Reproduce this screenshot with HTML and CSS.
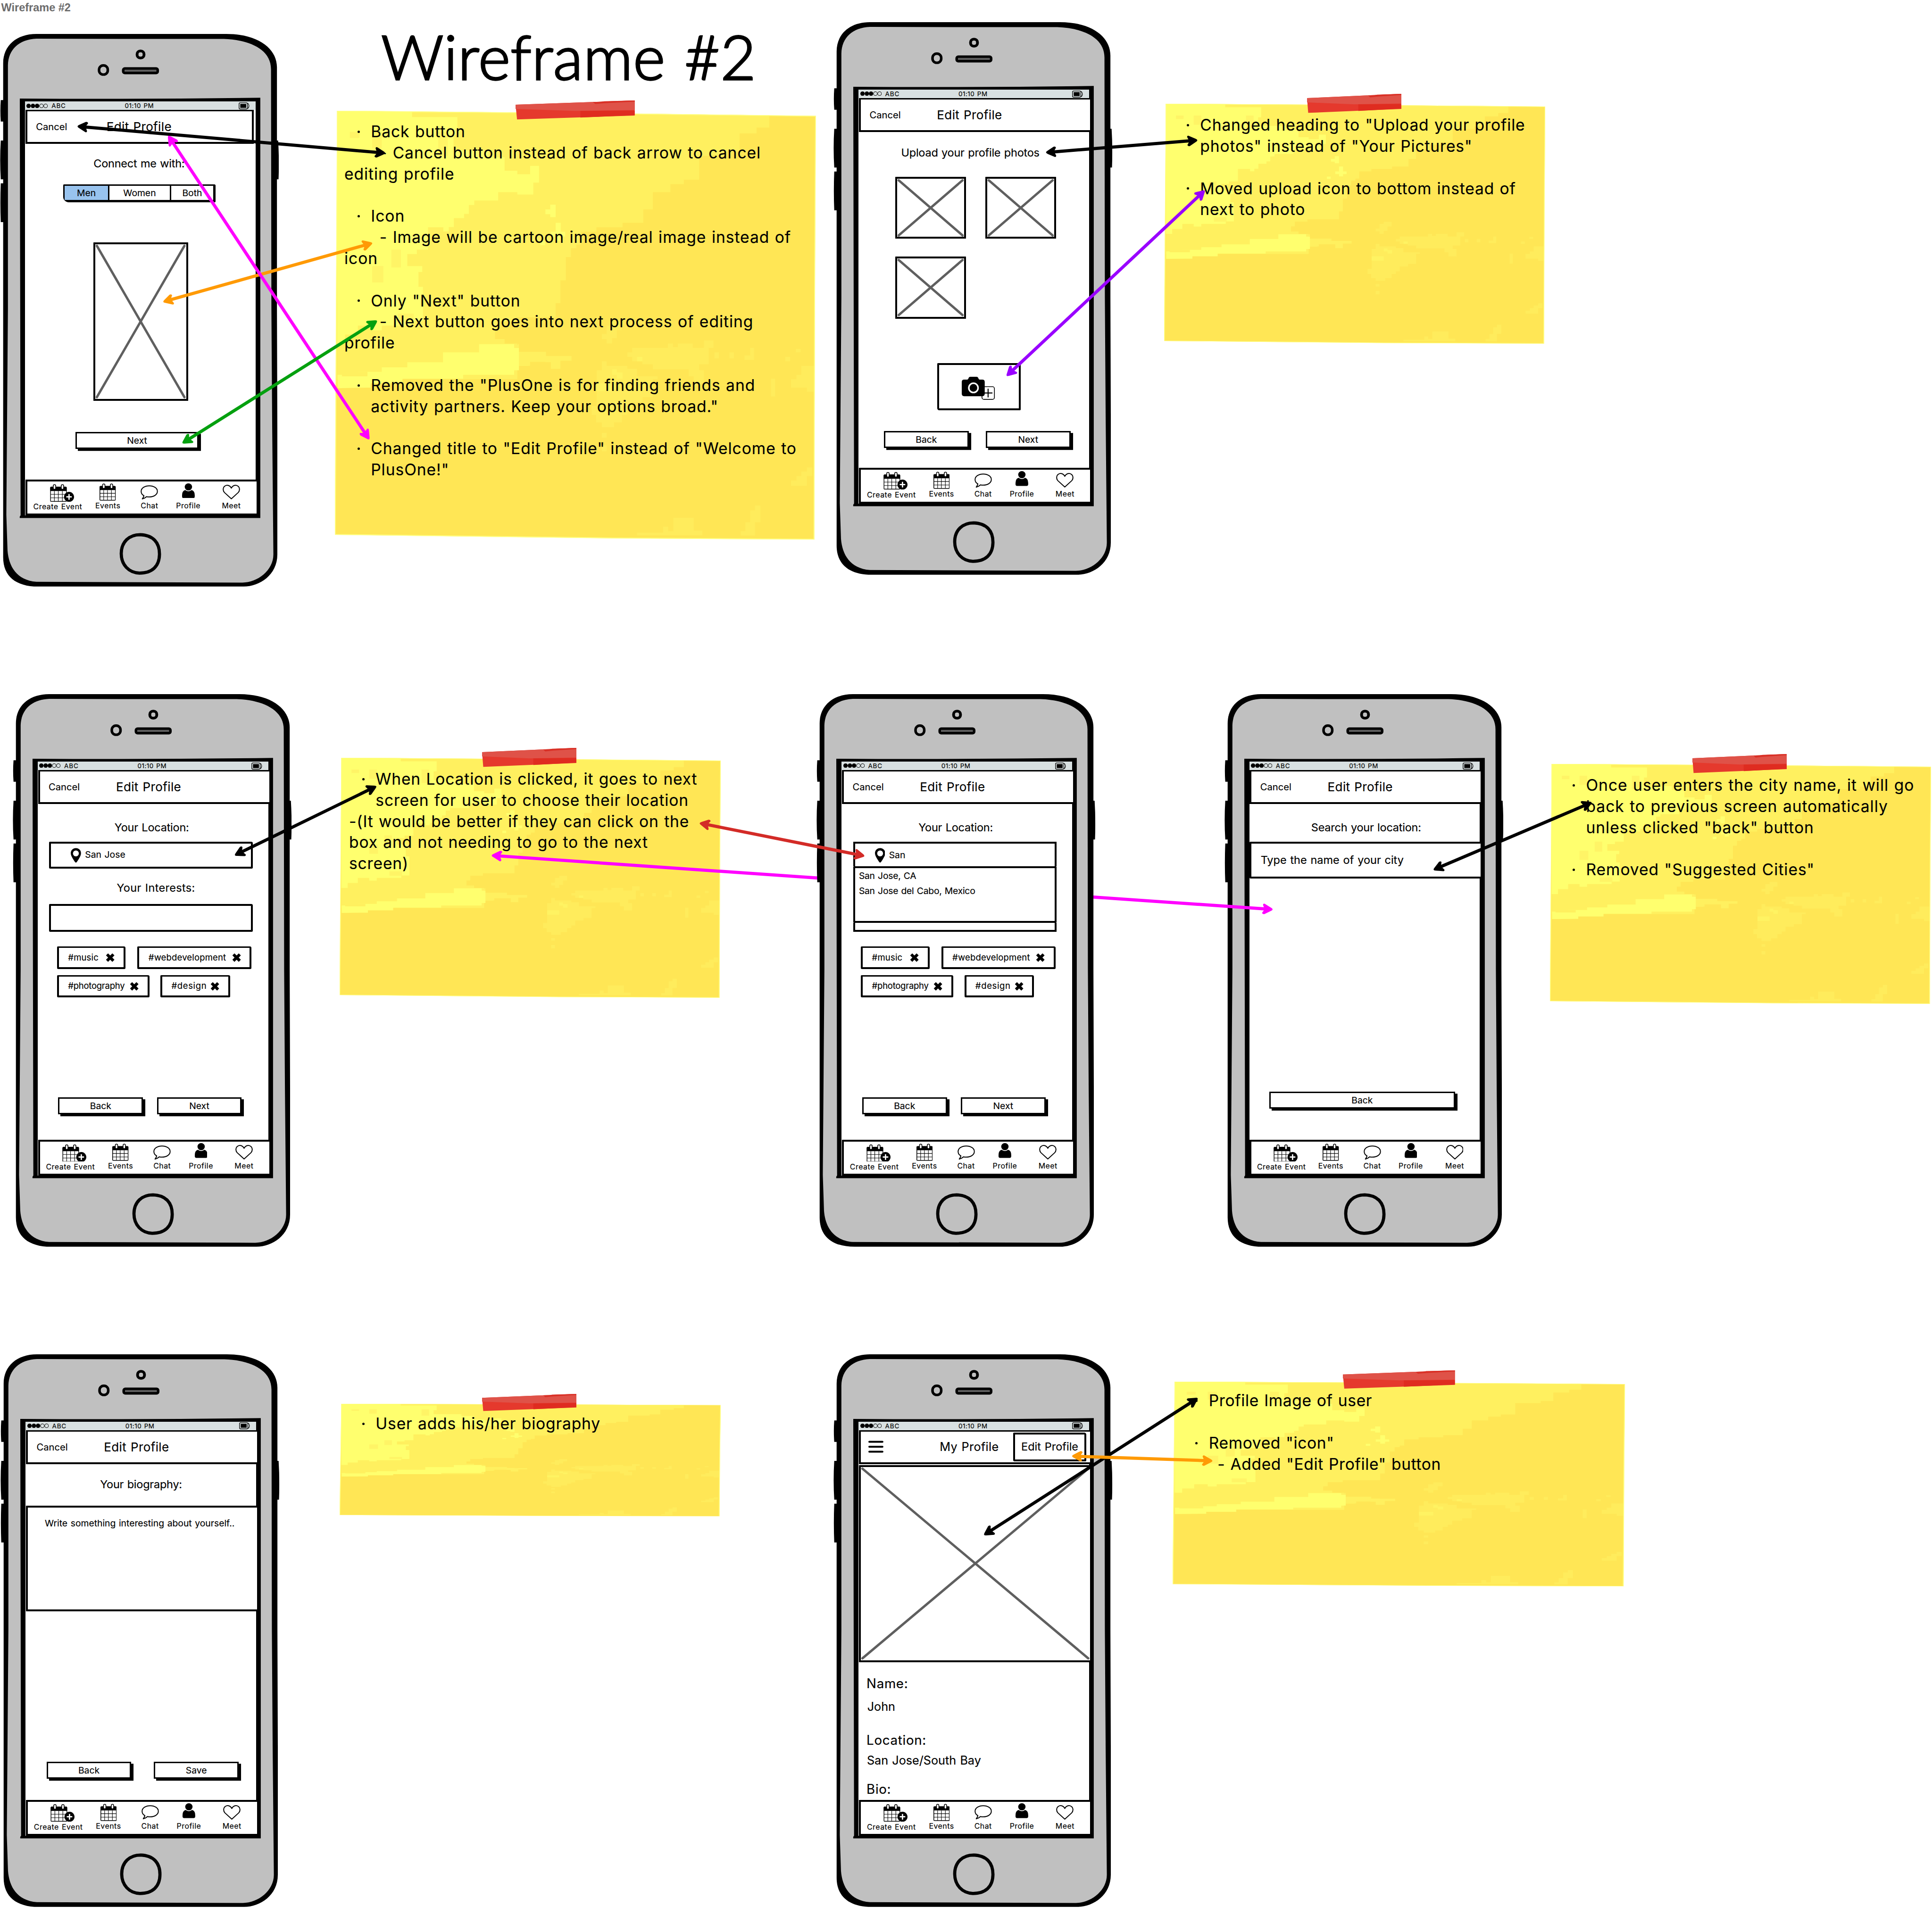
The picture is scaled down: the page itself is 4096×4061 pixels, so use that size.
FILE: index.html
```html
<!DOCTYPE html>
<html lang="en">
<head>
<meta charset="utf-8">
<title>Wireframe #2</title>
<link rel="stylesheet" href="styles.css">
</head>
<body>
<svg class="defs" aria-hidden="true">
  <symbol id="frame" viewBox="0 0 704 1404">
    <path d="M2 173h18v54H2q-2-27 0-54zM2 275h18v98H2q-3-49 0-98zM2 383h18v98H2q-2-49 0-98zM690 275h12q3 49 1 98h-13z"/>
    <path d="M92 6H565C650 4 699 42 699 90V700L700 1000V1320C700 1372 655 1401 615 1401H96C40 1401 8 1375 8 1327V80C8 35 42 6 92 6Z"/>
    <path fill="#c0c0c0" d="M92 18L300 18.500L565 18.500C620 20 684 40 684 95L685 700L687 1000L690 1320C690 1360 650 1391 612 1391L92 1389C42 1385 22 1350 19 1310L16 1220L20 700V85C21 45 48 20 92 18Z"/>
    <rect x="346" y="49" width="17.500" height="17.500" rx="8" fill="#c0c0c0" stroke="#000" stroke-width="7"/>
    <rect x="250" y="85.500" width="22" height="23" rx="10.500" fill="#c0c0c0" stroke="#000" stroke-width="6.500"/>
    <rect x="311" y="93" width="87" height="11.500" rx="4" fill="#5e5e5e" stroke="#000" stroke-width="6.500"/>
    <path d="M50 169Q350 171 657 167V1228H50Q49 1224 52 1221Z"/>
    <path fill="#c0c0c0" stroke="#000" stroke-width="8" d="M354 1270C386 1271 403 1290 402.500 1320C402 1350 384 1367 352 1367C325 1366 306 1346 306 1318C306 1288 326 1270 354 1270Z"/>
  </symbol>
  <symbol id="signal" viewBox="0 0 54 11">
    <g stroke="#000" stroke-width="1.200"><circle cx="5.500" cy="5.500" r="4.900"/><circle cx="16.500" cy="5.500" r="4.900"/><circle cx="27" cy="5.500" r="4.900"/><circle cx="38" cy="5.500" r="4.800" fill="none"/><circle cx="48.500" cy="5.500" r="4.800" fill="none"/></g>
  </symbol>
  <symbol id="battery" viewBox="0 0 28 18">
    <rect x="1" y="1" width="21" height="16" rx="3" fill="none" stroke="#000" stroke-width="1.600"/><rect x="4" y="4" width="15" height="10"/><path d="M23 2Q29 9 23 16" fill="none" stroke="#000" stroke-width="1.600"/>
  </symbol>
  <symbol id="calendar" viewBox="0 0 90 94">
    <rect x="2" y="16" width="86" height="76" rx="3" fill="#fff" stroke="#000" stroke-width="4"/>
    <path d="M0 36V20Q0 13 8 13H82Q90 13 90 20V36Z"/>
    <path d="M23 36V92M44 36V92M66 36V92M2 54H88M2 73H88" fill="none" stroke="#000" stroke-width="2.800"/>
    <rect x="17" y="2" width="13" height="25" rx="6" fill="#fff" stroke="#000" stroke-width="4"/><rect x="60" y="2" width="13" height="25" rx="6" fill="#fff" stroke="#000" stroke-width="4"/>
  </symbol>
  <symbol id="create" viewBox="0 0 129 94">
    <use href="#calendar" width="90" height="94"/>
    <circle cx="102" cy="68" r="27"/><path d="M102 53V83M87 68H117" stroke="#fff" stroke-width="7"/>
  </symbol>
  <symbol id="chat" viewBox="0 0 44 36">
    <path d="M22 1.500C33 1.500 42.500 7 42.500 15.500C42.500 24 33 29.500 22 29.500Q18 29.500 15 28.800Q10 33.500 4.500 34.500Q8 30 8.500 26.500C4 24 1.500 20 1.500 15.500C1.500 7 11 1.500 22 1.500Z" fill="#fff" stroke="#000" stroke-width="2.400" stroke-linejoin="round"/>
  </symbol>
  <symbol id="person" viewBox="0 0 32 38">
    <ellipse cx="16" cy="9" rx="9.300" ry="9"/><path d="M8 17Q16 23 24 17Q32 19 32 30V33Q32 37.500 28 37.500H4Q0 37.500 0 33V30Q0 19 8 17Z"/>
  </symbol>
  <symbol id="heart" viewBox="0 0 44 37">
    <path d="M22 35.500L4.500 19.500C0 14.500 0.500 6.500 6 3C11.500 -.5 18.500 1.500 22 8.500C25.500 1.500 32.500 -.5 38 3C43.500 6.500 44 14.500 39.500 19.500Z" fill="#fff" stroke="#000" stroke-width="2.400" stroke-linejoin="round"/>
  </symbol>
  <symbol id="pin" viewBox="0 0 26 37">
    <path fill-rule="evenodd" d="M13 0C20 0 26 5 26 13C26 18 23 23 20 28L15.500 35Q13 38.500 10.500 35L6 28C3 23 0 18 0 13C0 5 6 0 13 0ZM13 6A7.500 7.500 0 1 0 13 21A7.500 7.500 0 1 0 13 6Z"/>
  </symbol>
  <symbol id="close" viewBox="0 0 20 20">
    <path d="M3 3L17 17M17 3L3 17" stroke="#000" stroke-width="6.500"/>
  </symbol>
  <symbol id="camera" viewBox="0 0 84 59">
    <rect x="51" y="25" width="31.500" height="32" rx="5" fill="#fff" stroke="#000" stroke-width="2"/>
    <path d="M66.500 30V52M55.500 41H77.500" stroke="#000" stroke-width="2.600"/>
    <path d="M6 7H14Q16 7 17 4Q18 0 22 0H37Q41 0 42 4Q43 7 45 7H52Q58 7 58 13V43Q58 49 52 49H6Q0 49 0 43V13Q0 7 6 7Z"/>
    <circle cx="29.500" cy="28" r="11.700" stroke="#fff" stroke-width="4"/>
  </symbol>
  <symbol id="paper" viewBox="28 99 1508 1440" preserveAspectRatio="none">
    <path fill="#ffe655" d="M35 99L850 107L1536 116L1533 700L1531 1538L900 1534L28 1522L32 700Z"/>
    <path fill="#fff05f" d="M35 99L850 107L1390 114V155H1350V175H1297V235H1255V250H1170V330H1122V345H1080V372H1025V430H995V475H930V490H848V505H800V548H785V560H768V590H752V668H735V745H720V792H595V806H545V835H530V865H560V880H600V1000H35Z"/>
    <path fill="#ffff6e" d="M35 99L270 101V120H412V180H400V232H510V255H560V300H600V312H640V284H668V340H650V380H600V372H540V400H465V415H448V445H433V459H401V489H385V504H368V490H320V565H285V580H255V620H302V640H290V690H304V805H272V820H175V836H145V820H100V850H60V880H35Z"/>
    <path fill="#fff466" d="M75 170h30v20h-30zM145 170h30v55h-30zM352 170h30v80h-30zM205 565h30v60h-30zM145 620h35v55h-35zM225 780h50v26h-50z"/>
    <path fill="#ffff6e" d="M36 1030V985H96V975H175V960H255V943H367V910H480V882H590V895H605V908H640V918H675V935H635V955H605V970H590V985H430V998H240V1014H140V1028ZM688 922H720V942H688ZM688 430h15v-16h17v42h-17v-10h-15zM705 505h15v-30h16v30h14v16h-14v14h-16v-14h-15zM672 536h15v14h-15z"/>
    <path fill="#fff05f" d="M590 895H605V908H690V922H770V938H735V965H705V942H640V955H605V880ZM65 925H100V975H130V990H50V960H65Z"/>
    <path fill="#ffec5c" d="M945 910H960V895H1072V880H1088V892H1103V880H1150V895H1185V870H1215V895H1200V950H1170V970H1185V1015H1153V990H1137V967H1025V950H992V940H960V925H945ZM849 970H865V940H880V955H945V965H975V990H1040V1000H1025V1060H993V1076H960V1105H945V1120H928V1145H903V1161H865V1145H847V1120H833V1090H849ZM865 848H880V820H897V807H928V835H912V862H897V880H880V865H865ZM1490 970V955H1530V1042H1508V1028H1458V1000H1475V985H1490ZM1458 1358V1340H1475V1325H1490V1310H1508V1296H1525V1325H1508V1358ZM1089 1465H1153V1508H1180V1524H975V1515H1057V1495H1073V1510H1089ZM1330 1440H1345V1424H1362V1480H1345V1525H1300V1510H1315V1480H1330ZM1218 910h14v20h-14zM1265 910h14v20h-14zM1330 895h12v40h-30v-15h18zM1395 998h13v60h-13zM865 1180h15v16h-15zM865 1222h15v20h-15zM1440 925h15v15h-15zM1473 898h15v12h-15z"/>
    <path fill="#fff362" d="M897 967H912V977H930V998H912V985H897ZM849 1014H897V1040H849ZM975 925H992V940H975Z"/>
    <path fill="none" stroke="#ffff82" stroke-width="3" d="M36 100L850 108L1535 117L1532 700L1530 1537L900 1533L29 1521L33 700Z"/>
  </symbol>
  <symbol id="tape" viewBox="0 0 240 50" preserveAspectRatio="none">
    <path fill="#e5392d" d="M0 11L239 0V39L3 49Z"/><path fill="#df5248" d="M0 11L239 0V25L120 27L0 22Z"/><path fill="#d93026" d="M155 4L170 4L178 2L239 0V3L180 7L160 9Z"/><path fill="#df2c20" d="M130 27L239 26V38L130 44Z"/>
  </symbol>
  <marker id="m-black" viewBox="0 0 28 28" markerWidth="28" markerHeight="28" refX="14" refY="14" markerUnits="userSpaceOnUse" orient="auto-start-reverse"><path d="M26 14Q26 12 22 10L5 1Q1 0 1 4L4 11V18L0 24Q1 28 6 27L22 18Q26 16 26 14Z"/></marker>
  <marker id="m-magenta" viewBox="0 0 28 28" markerWidth="28" markerHeight="28" refX="14" refY="14" markerUnits="userSpaceOnUse" orient="auto-start-reverse"><path fill="#f0f" d="M26 14Q26 12 22 10L5 1Q1 0 1 4L4 11V18L0 24Q1 28 6 27L22 18Q26 16 26 14Z"/></marker>
  <marker id="m-orange" viewBox="0 0 28 28" markerWidth="28" markerHeight="28" refX="14" refY="14" markerUnits="userSpaceOnUse" orient="auto-start-reverse"><path fill="#ff9a05" d="M26 14Q26 12 22 10L5 1Q1 0 1 4L4 11V18L0 24Q1 28 6 27L22 18Q26 16 26 14Z"/></marker>
  <marker id="m-green" viewBox="0 0 28 28" markerWidth="28" markerHeight="28" refX="14" refY="14" markerUnits="userSpaceOnUse" orient="auto-start-reverse"><path fill="#04a00f" d="M26 14Q26 12 22 10L5 1Q1 0 1 4L4 11V18L0 24Q1 28 6 27L22 18Q26 16 26 14Z"/></marker>
  <marker id="m-purple" viewBox="0 0 28 28" markerWidth="28" markerHeight="28" refX="14" refY="14" markerUnits="userSpaceOnUse" orient="auto-start-reverse"><path fill="#90f" d="M26 14Q26 12 22 10L5 1Q1 0 1 4L4 11V18L0 24Q1 28 6 27L22 18Q26 16 26 14Z"/></marker>
  <marker id="m-red" viewBox="0 0 28 28" markerWidth="28" markerHeight="28" refX="14" refY="14" markerUnits="userSpaceOnUse" orient="auto-start-reverse"><path fill="#d32b27" d="M26 14Q26 12 22 10L5 1Q1 0 1 4L4 11V18L0 24Q1 28 6 27L22 18Q26 16 26 14Z"/></marker>
</svg>

<main class="board">
  <p class="board-name">Wireframe #2</p>
  <h1 class="board-title">Wireframe #2</h1>

  <section class="phone phone-connect">
    <svg class="frame"><use href="#frame"/></svg>
    <div class="screen">
      <div class="status"><svg class="signal"><use href="#signal"/></svg><span class="carrier">ABC</span><span class="clock">01:10 PM</span><svg class="battery"><use href="#battery"/></svg></div>
      <header class="bar bar-short"><span class="cancel">Cancel</span><span class="title">Edit Profile</span></header>
      <div class="content">
        <h2 class="heading">Connect me with:</h2>
        <div class="segments"><span class="seg seg-on">Men</span><span class="seg">Women</span><span class="seg">Both</span></div>
        <div class="image portrait"><svg width="229" height="390"><path class="cross" d="M4 4L225 386M225 4L4 386"/></svg></div>
        <div class="buttons"><span class="button">Next</span></div>
      </div>
      <nav class="tabs">
        <div class="tab"><svg class="i-create"><use href="#create"/></svg><span>Create Event</span></div>
        <div class="tab"><svg class="i-cal"><use href="#calendar"/></svg><span>Events</span></div>
        <div class="tab"><svg class="i-chat"><use href="#chat"/></svg><span>Chat</span></div>
        <div class="tab"><svg class="i-person"><use href="#person"/></svg><span>Profile</span></div>
        <div class="tab"><svg class="i-heart"><use href="#heart"/></svg><span>Meet</span></div>
      </nav>
    </div>
  </section>

  <section class="phone phone-photos">
    <svg class="frame"><use href="#frame"/></svg>
    <div class="screen">
      <div class="status"><svg class="signal"><use href="#signal"/></svg><span class="carrier">ABC</span><span class="clock">01:10 PM</span><svg class="battery"><use href="#battery"/></svg></div>
      <header class="bar"><span class="cancel">Cancel</span><span class="title">Edit Profile</span></header>
      <div class="content">
        <h2 class="heading">Upload your profile photos</h2>
        <div class="photos">
          <div class="image"><svg width="169" height="147"><path class="cross" d="M4 4L165 143M165 4L4 143"/></svg></div>
          <div class="image"><svg width="169" height="147"><path class="cross" d="M4 4L165 143M165 4L4 143"/></svg></div>
          <div class="image"><svg width="169" height="147"><path class="cross" d="M4 4L165 143M165 4L4 143"/></svg></div>
        </div>
        <div class="upload"><svg width="84" height="59"><use href="#camera"/></svg></div>
        <div class="buttons"><span class="button">Back</span><span class="button">Next</span></div>
      </div>
      <nav class="tabs">
        <div class="tab"><svg class="i-create"><use href="#create"/></svg><span>Create Event</span></div>
        <div class="tab"><svg class="i-cal"><use href="#calendar"/></svg><span>Events</span></div>
        <div class="tab"><svg class="i-chat"><use href="#chat"/></svg><span>Chat</span></div>
        <div class="tab"><svg class="i-person"><use href="#person"/></svg><span>Profile</span></div>
        <div class="tab"><svg class="i-heart"><use href="#heart"/></svg><span>Meet</span></div>
      </nav>
    </div>
  </section>

  <section class="phone phone-location">
    <svg class="frame"><use href="#frame"/></svg>
    <div class="screen">
      <div class="status"><svg class="signal"><use href="#signal"/></svg><span class="carrier">ABC</span><span class="clock">01:10 PM</span><svg class="battery"><use href="#battery"/></svg></div>
      <header class="bar"><span class="cancel">Cancel</span><span class="title">Edit Profile</span></header>
      <div class="content">
        <h2 class="heading">Your Location:</h2>
        <div class="field"><svg class="pin"><use href="#pin"/></svg><span>San Jose</span></div>
        <h2 class="heading heading-interests">Your Interests:</h2>
        <div class="field field-interests"></div>
        <div class="tags">
          <div class="tag-row"><span class="tag tag-music">#music<svg class="x"><use href="#close"/></svg></span><span class="tag tag-web">#webdevelopment<svg class="x"><use href="#close"/></svg></span></div>
          <div class="tag-row tag-row-2"><span class="tag tag-photo">#photography<svg class="x"><use href="#close"/></svg></span><span class="tag tag-design">#design<svg class="x"><use href="#close"/></svg></span></div>
        </div>
        <div class="buttons"><span class="button">Back</span><span class="button">Next</span></div>
      </div>
      <nav class="tabs">
        <div class="tab"><svg class="i-create"><use href="#create"/></svg><span>Create Event</span></div>
        <div class="tab"><svg class="i-cal"><use href="#calendar"/></svg><span>Events</span></div>
        <div class="tab"><svg class="i-chat"><use href="#chat"/></svg><span>Chat</span></div>
        <div class="tab"><svg class="i-person"><use href="#person"/></svg><span>Profile</span></div>
        <div class="tab"><svg class="i-heart"><use href="#heart"/></svg><span>Meet</span></div>
      </nav>
    </div>
  </section>

  <section class="phone phone-search">
    <svg class="frame"><use href="#frame"/></svg>
    <div class="screen">
      <div class="status"><svg class="signal"><use href="#signal"/></svg><span class="carrier">ABC</span><span class="clock">01:10 PM</span><svg class="battery"><use href="#battery"/></svg></div>
      <header class="bar"><span class="cancel">Cancel</span><span class="title">Edit Profile</span></header>
      <div class="content">
        <h2 class="heading">Search your location:</h2>
        <div class="city-field">Type the name of your city</div>
        <div class="buttons"><span class="button">Back</span></div>
      </div>
      <nav class="tabs">
        <div class="tab"><svg class="i-create"><use href="#create"/></svg><span>Create Event</span></div>
        <div class="tab"><svg class="i-cal"><use href="#calendar"/></svg><span>Events</span></div>
        <div class="tab"><svg class="i-chat"><use href="#chat"/></svg><span>Chat</span></div>
        <div class="tab"><svg class="i-person"><use href="#person"/></svg><span>Profile</span></div>
        <div class="tab"><svg class="i-heart"><use href="#heart"/></svg><span>Meet</span></div>
      </nav>
    </div>
  </section>

  <section class="phone phone-bio">
    <svg class="frame"><use href="#frame"/></svg>
    <div class="screen">
      <div class="status"><svg class="signal"><use href="#signal"/></svg><span class="carrier">ABC</span><span class="clock">01:10 PM</span><svg class="battery"><use href="#battery"/></svg></div>
      <header class="bar"><span class="cancel">Cancel</span><span class="title">Edit Profile</span></header>
      <div class="content">
        <h2 class="heading">Your biography:</h2>
        <div class="bio-field">Write something interesting about yourself..</div>
        <div class="buttons"><span class="button">Back</span><span class="button">Save</span></div>
      </div>
      <nav class="tabs">
        <div class="tab"><svg class="i-create"><use href="#create"/></svg><span>Create Event</span></div>
        <div class="tab"><svg class="i-cal"><use href="#calendar"/></svg><span>Events</span></div>
        <div class="tab"><svg class="i-chat"><use href="#chat"/></svg><span>Chat</span></div>
        <div class="tab"><svg class="i-person"><use href="#person"/></svg><span>Profile</span></div>
        <div class="tab"><svg class="i-heart"><use href="#heart"/></svg><span>Meet</span></div>
      </nav>
    </div>
  </section>

  <section class="phone phone-profile">
    <svg class="frame"><use href="#frame"/></svg>
    <div class="screen">
      <div class="status"><svg class="signal"><use href="#signal"/></svg><span class="carrier">ABC</span><span class="clock">01:10 PM</span><svg class="battery"><use href="#battery"/></svg></div>
      <header class="bar bar-profile"><svg class="menu" viewBox="0 0 38 31"><path d="M2.500 3H35.500M2.500 15.500H35.500M2.500 28H35.500" stroke="#000" stroke-width="5" stroke-linecap="round"/></svg><span class="title">My Profile</span><span class="edit">Edit Profile</span></header>
      <div class="content">
        <div class="image cover"><svg width="578" height="487"><path class="cross" d="M4 4L574 483M574 4L4 483"/></svg></div>
        <dl class="details">
          <dt>Name:</dt><dd>John</dd>
          <dt class="dt-location">Location:</dt><dd class="dd-location">San Jose/South Bay</dd>
          <dt class="dt-bio">Bio:</dt>
        </dl>
      </div>
      <nav class="tabs">
        <div class="tab"><svg class="i-create"><use href="#create"/></svg><span>Create Event</span></div>
        <div class="tab"><svg class="i-cal"><use href="#calendar"/></svg><span>Events</span></div>
        <div class="tab"><svg class="i-chat"><use href="#chat"/></svg><span>Chat</span></div>
        <div class="tab"><svg class="i-person"><use href="#person"/></svg><span>Profile</span></div>
        <div class="tab"><svg class="i-heart"><use href="#heart"/></svg><span>Meet</span></div>
      </nav>
    </div>
  </section>

  <aside class="note note-connect">
    <svg class="paper"><use href="#paper"/></svg><svg class="tape"><use href="#tape"/></svg>
    <div class="text">
      <p class="point">Back button</p>
      <p class="sub">- Cancel button instead of back arrow to cancel</p>
      <p class="wrap">editing profile</p>
      <p class="point gap">Icon</p>
      <p class="sub">- Image will be cartoon image/real image instead of</p>
      <p class="wrap">icon</p>
      <p class="point gap">Only "Next" button</p>
      <p class="sub">- Next button goes into next process of editing</p>
      <p class="wrap">profile</p>
      <p class="point gap">Removed the "PlusOne is for finding friends and</p>
      <p class="cont">activity partners. Keep your options broad."</p>
      <p class="point gap">Changed title to "Edit Profile" instead of "Welcome to</p>
      <p class="cont">PlusOne!"</p>
    </div>
  </aside>

  <aside class="note note-photos">
    <svg class="paper"><use href="#paper"/></svg><svg class="tape"><use href="#tape"/></svg>
    <div class="text">
      <p class="point">Changed heading to "Upload your profile</p>
      <p class="cont">photos" instead of "Your Pictures"</p>
      <p class="point gap">Moved upload icon to bottom instead of</p>
      <p class="cont">next to photo</p>
    </div>
  </aside>

  <aside class="note note-location">
    <svg class="paper"><use href="#paper"/></svg><svg class="tape"><use href="#tape"/></svg>
    <div class="text">
      <p class="point">When Location is clicked, it goes to next</p>
      <p class="cont">screen for user to choose their location</p>
      <p class="wrap">-(It would be better if they can click on the</p>
      <p class="wrap">box and not needing to go to the next</p>
      <p class="wrap">screen)</p>
    </div>
  </aside>

  <aside class="note note-search">
    <svg class="paper"><use href="#paper"/></svg><svg class="tape"><use href="#tape"/></svg>
    <div class="text">
      <p class="point">Once user enters the city name, it will go</p>
      <p class="cont">back to previous screen automatically</p>
      <p class="cont">unless clicked "back" button</p>
      <p class="point gap">Removed "Suggested Cities"</p>
    </div>
  </aside>

  <aside class="note note-bio">
    <svg class="paper"><use href="#paper"/></svg><svg class="tape"><use href="#tape"/></svg>
    <div class="text"><p class="point">User adds his/her biography</p></div>
  </aside>

  <aside class="note note-profile">
    <svg class="paper"><use href="#paper"/></svg><svg class="tape"><use href="#tape"/></svg>
    <div class="text">
      <p class="point">Profile Image of user</p>
      <p class="point gap">Removed "icon"</p>
      <p class="sub">- Added "Edit Profile" button</p>
    </div>
  </aside>

  <svg class="arrows" viewBox="0 0 4876 4834">
    <path class="arrow magenta" d="M1253 2160.400L3200 2295.200"/>
  </svg>

  <section class="phone phone-suggest">
    <svg class="frame"><use href="#frame"/></svg>
    <div class="screen">
      <div class="status"><svg class="signal"><use href="#signal"/></svg><span class="carrier">ABC</span><span class="clock">01:10 PM</span><svg class="battery"><use href="#battery"/></svg></div>
      <header class="bar"><span class="cancel">Cancel</span><span class="title">Edit Profile</span></header>
      <div class="content">
        <h2 class="heading">Your Location:</h2>
        <div class="field field-open"><svg class="pin"><use href="#pin"/></svg><span>San</span></div>
        <div class="dropdown"><p>San Jose, CA</p><p>San Jose del Cabo, Mexico</p></div>
        <div class="field-rest"></div>
        <div class="tags">
          <div class="tag-row"><span class="tag tag-music">#music<svg class="x"><use href="#close"/></svg></span><span class="tag tag-web">#webdevelopment<svg class="x"><use href="#close"/></svg></span></div>
          <div class="tag-row tag-row-2"><span class="tag tag-photo">#photography<svg class="x"><use href="#close"/></svg></span><span class="tag tag-design">#design<svg class="x"><use href="#close"/></svg></span></div>
        </div>
        <div class="buttons"><span class="button">Back</span><span class="button">Next</span></div>
      </div>
      <nav class="tabs">
        <div class="tab"><svg class="i-create"><use href="#create"/></svg><span>Create Event</span></div>
        <div class="tab"><svg class="i-cal"><use href="#calendar"/></svg><span>Events</span></div>
        <div class="tab"><svg class="i-chat"><use href="#chat"/></svg><span>Chat</span></div>
        <div class="tab"><svg class="i-person"><use href="#person"/></svg><span>Profile</span></div>
        <div class="tab"><svg class="i-heart"><use href="#heart"/></svg><span>Meet</span></div>
      </nav>
    </div>
  </section>

  <svg class="arrows" viewBox="0 0 4876 4834">
    <path class="arrow black" d="M207.600 320L960 385.400"/>
    <path class="arrow orange" d="M423.600 758.700L928 616.900"/>
    <path class="arrow magenta" d="M431.600 353L925 1099"/>
    <path class="arrow green" d="M470.800 1112.300L941.300 816.400"/>
    <path class="arrow black" d="M2652 384L3010 355"/>
    <path class="arrow purple" d="M2549.800 940.500L3031.700 489.200"/>
    <path class="arrow black" d="M603.800 2153.700L938.900 1990.300"/>
    <path class="arrow red" d="M1777.800 2080.400L2169.900 2158.600"/>
    <path class="arrow black" d="M3629.500 2191L4006 2030.700"/>
    <path class="arrow black" d="M2494 3868.500L3012.500 3536.500"/>
    <path class="arrow orange" d="M2718 3676.400L3048 3687.600"/>
  </svg>
</main>
</body>
</html>
```
FILE: styles.css
```css
* { box-sizing: border-box; }
body { margin: 0; background: #fff; overflow: hidden; }
p, h1, h2, dl, dd { margin: 0; font-weight: 400; }
svg { display: block; flex: none; }
.defs { position: absolute; width: 0; height: 0; }

/* Board: a free canvas of phones, notes and arrows */
.board {
  position: relative;
  width: 4876px;
  height: 4834px;
  zoom: 0.84;
  overflow: hidden;
  color: #000;
  font-family: Inter, "Liberation Sans", sans-serif;
  font-size: 23px;
  word-spacing: 0.06em;
  white-space: nowrap;
  -webkit-text-stroke: 0.2px #000;
}
.board-name {
  position: absolute; left: 3px; top: 3px;
  font: bold 28px/32px "Liberation Sans", Arial, sans-serif;
  word-spacing: 0;
  color: #6c6c6c;
  -webkit-text-stroke: 0;
}
.board-title {
  position: absolute; left: 962px; top: 51px;
  font: 300 155px/180px Lato, sans-serif;
  letter-spacing: 0.006em;
  word-spacing: 0.03em;
  -webkit-text-stroke: 4px #000;
}

/* Phone */
.phone { position: absolute; width: 704px; height: 1404px; padding: 176px 59px 0 63px; }
.frame { position: absolute; left: 0; top: 0; width: 704px; height: 1404px; }
.phone-connect { left: 0; top: 80px; }
.phone-photos { left: 2104px; top: 50px; }
.phone-location { left: 32px; top: 1746.500px; }
.phone-suggest { left: 2061px; top: 1746.500px; }
.phone-search { left: 3090px; top: 1746.500px; }
.phone-bio { left: 1.500px; top: 3413px; }
.phone-profile { left: 2104px; top: 3413px; }
.screen { position: relative; display: flex; flex-direction: column; width: 582px; height: 1045px; background: #fff; }

.status { display: flex; align-items: center; height: 22px; padding: 0 15px 0 4px; background: #d8e0e1; font-size: 16px; letter-spacing: 0.04em; }
.signal { width: 54px; height: 11px; }
.carrier { width: 185px; padding-left: 9px; letter-spacing: 0.07em; }
.clock { margin-left: 9px; }
.battery { width: 28px; height: 18px; margin-left: auto; }

.bar {
  display: grid; grid-template-columns: 170px 186px 1fr; align-items: center;
  width: 588px; height: 85px; margin-left: 1px; padding-left: 22px;
  border: 5px solid #000; border-top-width: 4px; background: #fff;
}
.bar-short { width: 576px; grid-template-columns: 178px 186px 1fr; }
.cancel { font-size: 24px; }
.title { font-size: 31px; letter-spacing: 0.014em; }
.bar-profile { grid-template-columns: 180px 186px 1fr; padding-left: 19px; padding-right: 10px; }
.bar-profile .title { font-size: 30px; }
.menu { width: 38px; height: 31px; }
.edit { height: 73px; border: 5px solid #000; border-radius: 2px 5px 2px 4px; font-size: 28px; line-height: 62px; text-align: center; }

.content { flex: 1; display: flex; flex-direction: column; align-items: flex-start; }
.heading { font-size: 28px; line-height: 30px; letter-spacing: -0.01em; text-align: center; }
.image { border: 5px solid #000; border-radius: 1px; }
.cross { fill: none; stroke: #5f5f5f; stroke-width: 6; stroke-linecap: round; }

.button {
  width: 214px; height: 43px; border: 4px solid #000; background: #fff;
  box-shadow: 6px 5px 0 #000; line-height: 37px; text-align: center;
}
.buttons { display: flex; }

.tabs {
  display: grid; grid-template-columns: 128px 125px 85px 111px 1fr;
  width: 588px; height: 90px; margin-left: 1px; padding: 4px 10px 0 13px;
  border: 5px solid #000; background: #fff; font-size: 19px; letter-spacing: 0.03em;
}
.tab { display: grid; grid-template-rows: 46px 24px; justify-items: center; align-items: center; line-height: 24px; }
.tab:first-child { grid-template-rows: 46px 28px; }
.i-create { width: 61px; height: 44px; margin-top: 3px; margin-left: 21px; }
.i-cal { width: 41px; height: 44px; }
.i-chat { width: 44px; height: 36px; }
.i-person { width: 32px; height: 38px; margin-bottom: 8px; }
.i-heart { width: 44px; height: 37px; }

/* Connect */
.phone-connect .heading { width: 576px; margin-top: 35px; }
.segments {
  display: grid; grid-template-columns: 109px 156px 1fr; width: 384px; height: 46px;
  margin: 37px 0 0 97px; border: 4px solid #000; border-width: 4px 7px 7px 4px;
  border-radius: 2px 3px 2px 14px; line-height: 36px; text-align: center;
}
.seg + .seg { border-left: 4px solid #000; }
.seg-on { background: #98c3ee; }
.portrait { width: 239px; height: 400px; margin: 101px 0 0 173px; }
.phone-connect .buttons { margin: 79px 0 0 128px; }
.phone-connect .button { width: 310px; }

/* Photos */
.phone-photos .heading { width: 564px; margin-top: 37px; }
.photos { display: grid; grid-template-columns: 179px 179px; grid-auto-rows: 157px; gap: 45px 49px; margin: 46px 0 0 92px; }
.upload { width: 210px; height: 119px; margin: 112px 0 0 199px; padding: 30px 0 0 57px; border: 5px solid #000; border-radius: 2px 4px 2px 5px; }
.phone-photos .buttons { gap: 43px; margin: 52px 0 0 64px; }

/* Location */
.phone-location .heading, .phone-suggest .heading { width: 576px; margin-top: 44px; }
.field {
  display: flex; align-items: center; width: 514px; height: 69px; margin: 21px 0 0 29px;
  padding: 0 0 4px 50px; border: 5px solid #000; border-radius: 2px 4px 3px 3px;
}
.pin { width: 26px; height: 38px; margin-top: 4px; margin-right: 10px; }
.phone-location .heading-interests { width: 597px; margin-top: 33px; letter-spacing: 0.014em; }
.field-interests { height: 70px; margin-top: 26px; }
.tags { margin: 37px 0 0 49px; font-size: 22px; letter-spacing: 0.01em; }
.tag-row { display: flex; gap: 30px; }
.tag-row-2 { gap: 28px; margin-top: 15px; }
.tag {
  display: flex; align-items: center; justify-content: space-between; height: 57px;
  padding: 0 22px 2px 23px; border: 5px solid #000; border-width: 4px 5px 5px; border-radius: 2px 4px 3px 3px;
}
.tag-music { width: 173px; }
.tag-web { width: 288px; }
.tag-photo { width: 233px; letter-spacing: -0.013em; }
.tag-design { width: 176px; letter-spacing: 0.035em; }
.x { width: 23px; height: 23px; margin-top: 3px; }
.phone-location .buttons, .phone-suggest .buttons { gap: 35px; margin: 252px 0 0 52px; }

.field-open { height: 62px; padding-bottom: 0; border-bottom: 0; border-radius: 0; }
.dropdown { width: 514px; height: 143px; margin-left: 29px; padding: 0 0 0 10px; border: 5px solid #000; border-radius: 2px; line-height: 38.500px; letter-spacing: -0.013em; }
.field-rest { width: 514px; height: 23px; margin-left: 29px; border: 5px solid #000; border-top: 0; }

/* Search */
.phone-search .heading { width: 590px; margin-top: 44px; }
.city-field { width: 588px; height: 93px; margin: 21px 0 0 1px; padding-left: 23px; border: 5px solid #000; border-radius: 2px 4px 2px 3px; background: #fff; font-size: 28px; line-height: 84px; }
.phone-search .buttons { margin: 538px 0 0 50px; }
.phone-search .button { width: 470px; }
.phone-search .tabs { grid-template-columns: 125px 124px 85px 110px 1fr; }

/* Biography */
.phone-bio .heading { width: 583px; margin-top: 36px; }
.bio-field { width: 588px; height: 267px; margin: 39px 0 0 1px; padding: 26px 0 0 43px; border: 5px solid #000; background: #fff; line-height: 28px; }
.phone-bio .buttons { gap: 57px; margin: 380px 0 0 53px; }

/* Profile */
.cover { width: 588px; height: 497px; margin: 3px 0 0 1px; background: #fff; }
.details { margin: 38px 0 0 20px; font-size: 33px; line-height: 34px; letter-spacing: 0.025em; }
.details dd { margin: 26px 0 52px 2px; font-size: 30px; line-height: 30px; letter-spacing: 0; }
.details .dd-location { margin: 20px 0 40px 1px; }

/* Notes */
.note { position: absolute; width: 962px; height: 606px; padding-top: 28px; font-size: 40px; line-height: 53.350px; letter-spacing: 0.025em; }
.paper { position: absolute; left: 0; top: 0; width: 100%; height: 100%; }
.tape { position: absolute; left: 360px; top: -25px; width: 239px; height: 49px; }
.text { position: relative; }
.note-connect { left: 845px; top: 280px; width: 1214px; height: 1083px; padding-top: 26px; letter-spacing: 0.028em; }
.note-connect .tape { left: 456px; top: -26px; width: 302px; }
.note-photos { left: 2938px; top: 261.500px; }
.note-photos .tape { left: 361px; }
.note-location { left: 857px; top: 1912.500px; }
.note-search { left: 3912px; top: 1928px; letter-spacing: 0.028em; }
.note-bio { left: 857px; top: 3544px; height: 284px; padding-top: 24px; }
.note-bio .tape { height: 44px; }
.note-profile { left: 2960px; top: 3488px; width: 1142px; height: 517px; padding-top: 22px; letter-spacing: 0.018em; }
.note-profile .tape { left: 429px; top: -28px; width: 284px; height: 47px; }
.point::before { content: ""; display: inline-block; width: 6px; height: 6px; margin: 0 28px 11px 57px; border-radius: 3px; background: #000; vertical-align: baseline; }
.gap { margin-top: 53.350px; }
.sub { padding-left: 113px; }
.wrap { padding-left: 24px; }
.cont { padding-left: 91px; }

/* Arrows */
.arrows { position: absolute; left: 0; top: 0; width: 4876px; height: 4834px; pointer-events: none; }
.arrow { fill: none; stroke-width: 8; }
.black { stroke: #000; marker-start: url(#m-black); marker-end: url(#m-black); }
.magenta { stroke: #f0f; marker-start: url(#m-magenta); marker-end: url(#m-magenta); }
.orange { stroke: #ff9a05; marker-start: url(#m-orange); marker-end: url(#m-orange); }
.green { stroke: #04a00f; marker-start: url(#m-green); marker-end: url(#m-green); }
.purple { stroke: #90f; marker-start: url(#m-purple); marker-end: url(#m-purple); }
.red { stroke: #d32b27; marker-start: url(#m-red); marker-end: url(#m-red); }
```
